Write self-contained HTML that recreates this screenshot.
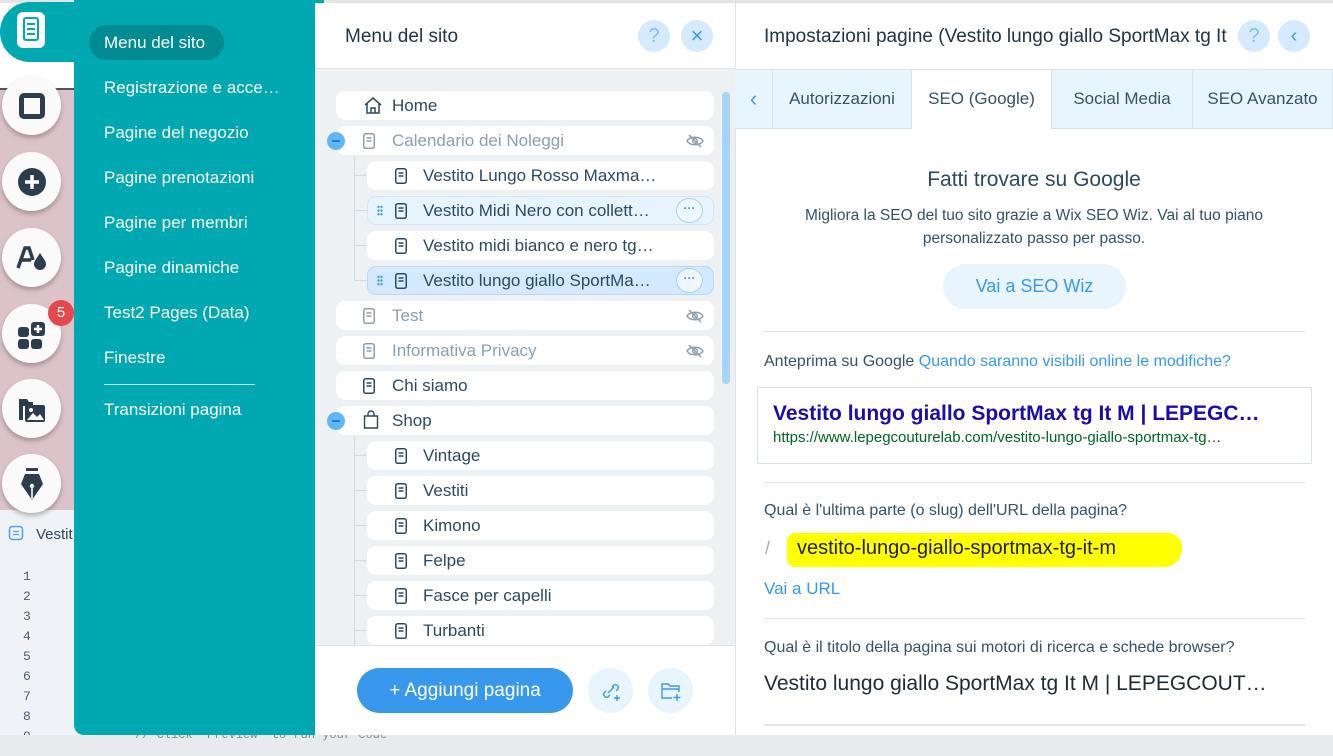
<!DOCTYPE html>
<html><head><meta charset="utf-8"><style>
*{box-sizing:border-box;margin:0;padding:0}
body{width:1333px;height:756px;position:relative;overflow:hidden;background:#f0f3f6;font-family:"Liberation Sans",sans-serif;color:#32536a}
.abs{position:absolute}
.circ{position:absolute;left:2px;width:59px;height:59px;border-radius:50%;background:#fafafa;box-shadow:0 3px 5px rgba(0,0,0,.25);display:flex;align-items:center;justify-content:center}
.tm{position:absolute;left:104px;color:#fff;font-size:17px}
.row{position:absolute;height:29px;background:#fff;border-radius:9px;font-size:17px;line-height:29px;color:#2b4a62;white-space:nowrap}
.main{left:336px;width:378px}
.child{left:367px;width:347px}
.row .ic{position:absolute;top:7px;display:block;line-height:0}
.row .tx{position:absolute;top:0}
.main .ic{left:27px}.main .tx{left:56px}
.child .ic{left:28px}.child .tx{left:56px}
.sel1 .ic,.sel2 .ic{left:27px;top:6px}.sel1 .tx,.sel2 .tx{left:55px;top:-1px}
.gray{color:#8a9fb0}
.sel1{background:#e7f4fe;border:1px solid #cfe6fb}
.sel2{background:#d3eafc;border:1px solid #b6dbf8}
.more{position:absolute;right:10px;top:1px;width:27px;height:25px;border-radius:50%;border:1.5px solid #a5d2f7;background:#eef7ff;color:#3b99ee;font-size:12px;line-height:18px;text-align:center;font-weight:bold}
.drag{position:absolute;left:9px;top:8px;width:6px;height:11px;background:radial-gradient(circle,#3b99ee 1.1px,transparent 1.3px) 0 0/3px 3.7px}
.eye{position:absolute;right:10px;top:8px;display:block;line-height:0}
.minus{position:absolute;left:-9px;top:6px;width:18px;height:18px;border-radius:50%;background:#62b6f5}
.minus:after{content:"";position:absolute;left:5px;top:8px;width:8px;height:2px;background:#1e7fd6}
.tab{position:absolute;top:70px;height:59px;background:#e9f5fe;border-right:1px solid #d6e2ea;border-bottom:1px solid #d6e2ea;font-size:17px;line-height:58px;text-align:center;color:#32536a}
.hb{position:absolute;width:32px;height:32px;border-radius:50%;background:#d5ebfd;color:#7fc0f7;text-align:center;line-height:32px;font-size:20px}
.hr{position:absolute;left:764px;width:541px;height:1px;background:#dfe5eb}
</style></head><body>
<div class="abs" style="left:0;top:0;width:1333px;height:3px;background:#e4e4e4"></div>
<div class="abs" style="left:0;top:3px;width:74px;height:85px;background:#fff"></div>
<div class="abs" style="left:0;top:88px;width:74px;height:2px;background:#555"></div>
<div class="abs" style="left:0;top:90px;width:74px;height:420px;background:#dcc3c9"></div>
<div class="abs" style="left:0;top:510px;width:74px;height:246px;background:#eff2f6"></div>
<svg class="abs" style="left:8px;top:525px" width="16" height="16"><rect x="1.5" y="1.5" width="13" height="13" rx="3" fill="none" stroke="#4aa0ef" stroke-width="1.5"/><path d="M5 6.5h6M5 9.5h6" stroke="#4aa0ef" stroke-width="1.3"/></svg>
<div class="abs" style="left:36px;top:526px;font-size:15px;color:#2b4a62">Vestit</div>
<div class="abs" style="left:23px;top:567px;font-family:'Liberation Mono',monospace;font-size:13px;color:#4a5f73;line-height:20px">1<br>2<br>3<br>4<br>5<br>6<br>7<br>8<br>9</div>
<div class="abs" style="left:0;top:735px;width:1333px;height:21px;background:#e8eaed"></div>
<div class="abs" style="left:135px;top:728px;font-family:'Liberation Mono',monospace;font-size:12px;color:#888">// Click "Preview" to run your code</div>
<div class="abs" style="left:0;top:2px;width:80px;height:60px;background:#00a8b0;border-radius:32px 0 0 32px"></div>
<div class="abs" style="left:17px;top:12px;width:28px;height:36px;background:#fff;border-radius:6px"></div>
<div class="abs" style="left:23px;top:17px;width:16px;height:24px;border:2.5px solid #00a8b0;border-radius:3px"></div>
<div class="abs" style="left:27px;top:23px;width:8px;height:2px;background:#00a8b0;box-shadow:0 5px 0 #00a8b0,0 10px 0 #00a8b0"></div>
<div class="circ" style="top:76px"><div style="width:26px;height:26px;border:5px solid #2b3d4f;border-radius:5px"></div></div>
<div class="circ" style="top:152px"><svg width="30" height="30"><circle cx="15" cy="15" r="14" fill="#2b3d4f"/><path d="M15 8v14M8 15h14" stroke="#fff" stroke-width="3.5"/></svg></div>
<div class="circ" style="top:228px"><svg width="32" height="26"><path d="M2 23L9 3h4l4 12M5 15h10" stroke="#2b3d4f" stroke-width="3.5" fill="none"/><path d="M24 8c3 5 6 8 6 11a6 6 0 0 1-12 0c0-3 3-6 6-11z" fill="#2b3d4f"/></svg></div>
<div class="circ" style="top:304px"><svg width="30" height="30"><rect x="1" y="8" width="11" height="10" rx="3" fill="#2b3d4f"/><rect x="1" y="20" width="11" height="10" rx="3" fill="#2b3d4f"/><rect x="14" y="20" width="11" height="10" rx="3" fill="#2b3d4f"/><rect x="14" y="3" width="14" height="14" rx="3" fill="#2b3d4f"/><path d="M21 6v8M17 10h8" stroke="#fff" stroke-width="2.5"/></svg></div>
<div class="abs" style="left:48px;top:300px;width:26px;height:26px;border-radius:50%;background:#e5484d;color:#fff;font-size:15px;line-height:26px;text-align:center">5</div>
<div class="circ" style="top:379px"><svg width="30" height="28"><path d="M2 4h8l2 3h4v4H6v14H2z" fill="#2b3d4f"/><rect x="8" y="10" width="20" height="17" rx="2" fill="#2b3d4f"/><path d="M10 25l6-7 4 4 3-3 4 6z" fill="#fff"/><circle cx="14" cy="15" r="2" fill="#fff"/></svg></div>
<div class="circ" style="top:454px"><svg width="24" height="34"><rect x="6" y="1" width="12" height="3" fill="#2b3d4f"/><path d="M5 7h14l4 10-11 16L1 17z" fill="#2b3d4f"/><path d="M12 19v13" stroke="#fff" stroke-width="1.6"/><circle cx="12" cy="19" r="2.2" fill="#fff"/></svg></div>
<div class="abs" style="left:74px;top:0;width:250px;height:735px;background:#00a9b1;border-radius:0 0 0 10px"></div>
<div class="abs" style="left:89px;top:25px;width:135px;height:35px;border-radius:18px;background:#008b92"></div>
<div class="tm" style="top:33px">Menu del sito</div>
<div class="tm" style="top:78px">Registrazione e acce…</div>
<div class="tm" style="top:123px">Pagine del negozio</div>
<div class="tm" style="top:168px">Pagine prenotazioni</div>
<div class="tm" style="top:213px">Pagine per membri</div>
<div class="tm" style="top:258px">Pagine dinamiche</div>
<div class="tm" style="top:303px">Test2 Pages (Data)</div>
<div class="tm" style="top:348px">Finestre</div>
<div class="abs" style="left:104px;top:384px;width:151px;height:1px;background:#bfe8ea"></div>
<div class="tm" style="top:400px">Transizioni pagina</div>
<div class="abs" style="left:315px;top:3px;width:420px;height:732px;background:#eef1f4"></div>
<div class="abs" style="left:315px;top:3px;width:420px;height:66px;background:#fff;border-bottom:1px solid #dfe3e7"></div>
<div class="abs" style="left:345px;top:26px;font-size:19px;color:#1e3344">Menu del sito</div>
<div class="hb" style="left:638px;top:20px">?</div>
<div class="hb" style="left:681px;top:20px;color:#3b99ee;font-size:22px">×</div>
<div class="abs" style="left:354px;top:156px;width:1px;height:124px;background:#cfdbe6"></div>
<div class="abs" style="left:354px;top:436px;width:1px;height:210px;background:#cfdbe6"></div>
<div class="abs" style="left:722px;top:92px;width:8px;height:292px;border-radius:4px;background:#a8d4f6"></div>
<div id="rows"></div>
<div class="abs" style="left:315px;top:645px;width:420px;height:90px;background:#fff;border-top:1px solid #dfe3e7"></div>
<div class="abs" style="left:357px;top:668px;width:216px;height:45px;border-radius:23px;background:#3899ec;color:#fff;font-size:19px;line-height:45px;text-align:center">+ Aggiungi pagina</div>
<div class="abs" style="left:588px;top:668px;width:45px;height:45px;border-radius:50%;background:#e8f4fe"></div>
<svg class="abs" style="left:599px;top:679px" width="24" height="24"><path d="M9 14l6-6M7 12l-2 2a3 3 0 0 0 4 4l2-2M13 8l2-2a3 3 0 0 1 4 4l-2 2" stroke="#3b99ee" stroke-width="1.4" fill="none"/><path d="M18 16v6M15 19h6" stroke="#3b99ee" stroke-width="1.4"/></svg>
<div class="abs" style="left:648px;top:668px;width:45px;height:45px;border-radius:50%;background:#e8f4fe"></div>
<svg class="abs" style="left:659px;top:679px" width="24" height="24"><path d="M13 19H3V5h6l2 2h9v6M3 10h17" stroke="#3b99ee" stroke-width="1.4" fill="none"/><path d="M18 15v7M14.5 18.5h7" stroke="#3b99ee" stroke-width="1.4"/></svg>
<div class="abs" style="left:735px;top:3px;width:598px;height:732px;background:#fff;border-left:1px solid #dfe3e7"></div>
<div class="abs" style="left:764px;top:26px;font-size:19px;color:#1e3344;white-space:nowrap;width:468px;overflow:hidden">Impostazioni pagine (Vestito lungo giallo SportMax tg It M</div>
<div class="hb" style="left:1238px;top:20px">?</div>
<div class="hb" style="left:1278px;top:20px;color:#3b99ee;font-size:20px">‹</div>
<div class="abs" style="left:735px;top:69px;width:598px;height:1px;background:#dfe3e7"></div>
<div class="tab" style="left:735px;width:38px;color:#3b99ee;font-size:22px">‹</div>
<div class="tab" style="left:773px;width:139px">Autorizzazioni</div>
<div class="tab" style="left:912px;width:140px;background:#fff;border-bottom:none">SEO (Google)</div>
<div class="tab" style="left:1052px;width:141px">Social Media</div>
<div class="tab" style="left:1193px;width:140px">SEO Avanzato</div>
<div class="abs" style="left:735px;top:168px;width:598px;text-align:center;font-size:21px;color:#2b4a62">Fatti trovare su Google</div>
<div class="abs" style="left:735px;top:204px;width:598px;text-align:center;font-size:15.5px;line-height:23px;color:#32536a">Migliora la SEO del tuo sito grazie a Wix SEO Wiz. Vai al tuo piano<br>personalizzato passo per passo.</div>
<div class="abs" style="left:943px;top:264px;width:183px;height:45px;border-radius:23px;background:#e8f4fe;color:#3899ec;font-size:18px;line-height:45px;text-align:center">Vai a SEO Wiz</div>
<div class="hr" style="top:331px"></div>
<div class="abs" style="left:764px;top:353px;font-size:16px;color:#32536a">Anteprima su Google <span style="color:#3899ec">Quando saranno visibili online le modifiche?</span></div>
<div class="abs" style="left:757px;top:387px;width:555px;height:77px;border:1px solid #d9e1e8"></div>
<div class="abs" style="left:773px;top:402px;font-size:21px;font-weight:bold;color:#1a0dab;white-space:nowrap">Vestito lungo giallo SportMax tg It M | LEPEGC…</div>
<div class="abs" style="left:773px;top:429px;font-size:15px;color:#006621;white-space:nowrap">https://www.lepegcouturelab.com/vestito-lungo-giallo-sportmax-tg…</div>
<div class="hr" style="top:482px"></div>
<div class="abs" style="left:764px;top:502px;font-size:16px;color:#32536a">Qual è l'ultima parte (o slug) dell'URL della pagina?</div>
<div class="abs" style="left:765px;top:538px;font-size:18px;color:#a0b0bd">/</div>
<div class="abs" style="left:787px;top:533px;width:395px;height:34px;background:#ffff00;border-radius:8px 14px 18px 8px"></div>
<div class="abs" style="left:797px;top:537px;font-size:20px;color:#1e1e1e">vestito-lungo-giallo-sportmax-tg-it-m</div>
<div class="abs" style="left:764px;top:579px;font-size:17px;color:#3899ec">Vai a URL</div>
<div class="hr" style="top:618px"></div>
<div class="abs" style="left:764px;top:639px;font-size:16px;color:#32536a">Qual è il titolo della pagina sui motori di ricerca e schede browser?</div>
<div class="abs" style="left:764px;top:672px;font-size:21px;color:#1e2b36;white-space:nowrap">Vestito lungo giallo SportMax tg It M | LEPEGCOUT…</div>
<div class="hr" style="top:724px;height:2px"></div>
<script>
var page='<svg width="12" height="16"><rect x="0.75" y="0.75" width="10.5" height="14.5" rx="2" fill="none" stroke="COL" stroke-width="1.5"/><path d="M3.5 5h5M3.5 8h5" stroke="COL" stroke-width="1.4"/></svg>';
var home='<svg width="20" height="18" style="margin-top:-2px"><path d="M2 9L10 2l8 7M4 7.5V17h12V7.5M8 17v-5h4v5" stroke="#2b4a62" stroke-width="1.5" fill="none"/></svg>';
var bag='<svg width="16" height="19" style="margin-top:-3px"><path d="M1.5 6h13v12h-13zM5 6V4a3 3 0 0 1 6 0v2" stroke="#2b4a62" stroke-width="1.4" fill="none"/></svg>';
var eye='<svg width="18" height="14"><path d="M1 7c3-5 13-5 16 0c-3 5-13 5-16 0z" stroke="#8a9fb0" stroke-width="1.4" fill="none"/><circle cx="9" cy="7" r="2.3" stroke="#8a9fb0" stroke-width="1.4" fill="none"/><path d="M3 1l12 12" stroke="#8a9fb0" stroke-width="1.4"/></svg>';
var R=[["Home","main","home"],["Calendario dei Noleggi","main gray","p",1,1],["Vestito Lungo Rosso Maxma…","child","p"],["Vestito Midi Nero con collett…","child sel1","p",0,0,1],["Vestito midi bianco e nero tg…","child","p"],["Vestito lungo giallo SportMa…","child sel2","p",0,0,1],["Test","main gray","p",0,1],["Informativa Privacy","main gray","p",0,1],["Chi siamo","main","p"],["Shop","main","bag",1],["Vintage","child","p"],["Vestiti","child","p"],["Kimono","child","p"],["Felpe","child","p"],["Fasce per capelli","child","p"],["Turbanti","child","p"]];
var h='';R.forEach(function(r,i){var t=91+35*i;var ic=r[2]=="home"?home:r[2]=="bag"?bag:page.replace(/COL/g,r[1].indexOf("gray")>=0?"#8a9fb0":"#2b4a62");
var hgt=t+29>645?645-t:29;
h+='<div class="row '+r[1]+'" style="top:'+t+'px;height:'+hgt+'px;overflow:visible">'+(r[3]?'<div class="minus"></div>':'')+(r[5]?'<div class="drag"></div>':'')+'<span class="ic">'+ic+'</span><span class="tx">'+r[0]+'</span>'+(r[4]?'<span class="eye">'+eye+'</span>':'')+(r[5]?'<div class="more">···</div>':'')+'</div>';
if(r[1].indexOf("child")>=0)h+='<div class="abs" style="left:354px;top:'+(t+14)+'px;width:13px;height:1px;background:#cfdbe6"></div>';});
document.getElementById("rows").innerHTML=h;
</script>
</body></html>
